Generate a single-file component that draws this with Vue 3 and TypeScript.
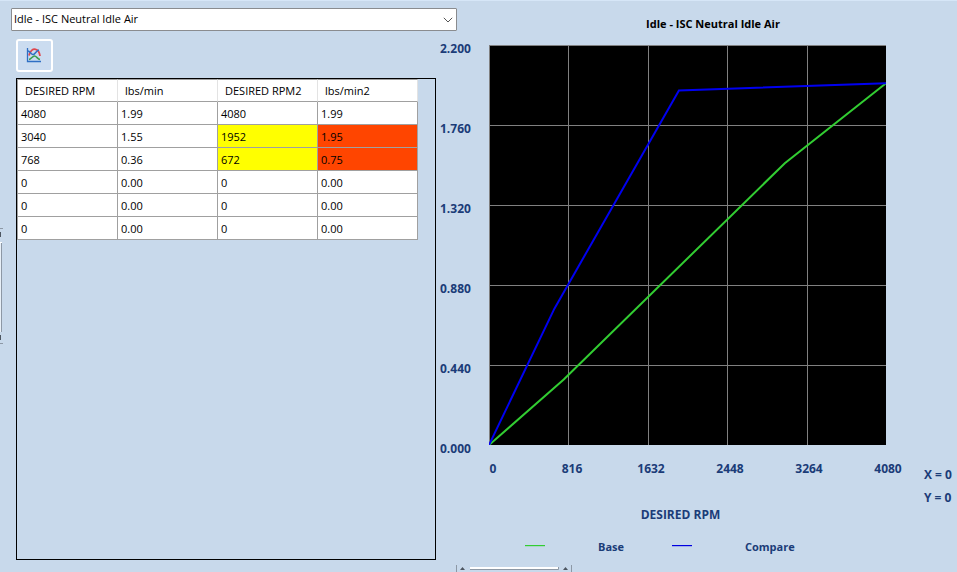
<script setup lang="ts">
import { computed, ref } from 'vue'

interface Point {
  rpm: number
  flow: number
}

const tables = ['Idle - ISC Neutral Idle Air']
const selected = ref(tables[0])

const base: Point[] = [
  { rpm: 4080, flow: 1.99 },
  { rpm: 3040, flow: 1.55 },
  { rpm: 768, flow: 0.36 },
  { rpm: 0, flow: 0 },
  { rpm: 0, flow: 0 },
  { rpm: 0, flow: 0 },
]
const compare: Point[] = [
  { rpm: 4080, flow: 1.99 },
  { rpm: 1952, flow: 1.95 },
  { rpm: 672, flow: 0.75 },
  { rpm: 0, flow: 0 },
  { rpm: 0, flow: 0 },
  { rpm: 0, flow: 0 },
]

const headers = ['DESIRED RPM', 'lbs/min', 'DESIRED RPM2', 'lbs/min2']
const rows = computed(() =>
  base.map((b, i) => ({
    base: b,
    compare: compare[i],
    rpmDiffers: b.rpm !== compare[i].rpm,
    flowDiffers: b.flow !== compare[i].flow,
  })),
)

const maxRpm = 4080
const maxFlow = 2.2
const plotWidth = 397
const plotHeight = 400
const steps = [0, 1, 2, 3, 4, 5]

const yLabels = steps.map((s) => (maxFlow * (1 - s / 5)).toFixed(3))
const xLabels = steps.map((s) => String((maxRpm * s) / 5))
const gridX = [0, 1, 2, 3, 4].map((s) => Math.round((plotWidth * s) / 5) + 0.5)
const gridY = [0, 1, 2, 3, 4].map((s) => (plotHeight * s) / 5 + 0.5)

function toLine(points: Point[]): string {
  return points
    .map((p) => `${(p.rpm / maxRpm) * plotWidth},${plotHeight * (1 - p.flow / maxFlow)}`)
    .join(' ')
}

const cursor = ref({ x: 0, y: 0 })
</script>

<template>
  <main class="page">
    <div class="splitter-v" aria-hidden="true">
      <svg width="3" height="116" viewBox="0 0 3 116">
        <path d="M0 .5h3M0 115.5h3" stroke="#8d98a5" />
        <path d="M0 4h1v5H0zM0 107h1v5H0z" fill="#4d5661" />
        <path d="M0 14.5h2" stroke="#fff" />
        <path d="M1.500 15v89" stroke="#8d98a5" />
        <path d="M.5 15v89" stroke="#e8f0f8" />
      </svg>
    </div>

    <div class="picker">
      <select v-model="selected" class="picker-select" aria-label="Table">
        <option v-for="t in tables" :key="t">{{ t }}</option>
      </select>
      <svg class="picker-arrow" width="10" height="6" viewBox="0 0 10 6" aria-hidden="true">
        <path d="M.8.8 5 5 9.200.8" fill="none" stroke="#555" />
      </svg>
    </div>

    <section class="data">
      <button type="button" class="chart-button" aria-label="Show chart">
        <svg width="16" height="16" viewBox="0 0 16 16" fill="none" aria-hidden="true">
          <path d="M1.500 1v13.500H15" stroke="#2f6fc4" stroke-width="1.300" />
          <path d="M3 8.500C4 3.500 7 1.800 9.500 2.300s4 3 4.500 6.700" stroke="#e0484e" stroke-width="1.800" />
          <path d="M3 12.500c2-.3 3.500-3.500 5.500-3.500s3 3 5.500 3.500" stroke="#3a9e4f" stroke-width="1.600" />
          <path d="M2 4c2 0 3 3.600 5 3.600S10 3.500 13 3" stroke="#2f6fc4" stroke-width="1.500" />
        </svg>
      </button>

      <div class="sheet">
        <table>
          <thead>
            <tr>
              <th v-for="h in headers" :key="h" scope="col">{{ h }}</th>
            </tr>
          </thead>
          <tbody>
            <tr v-for="(r, i) in rows" :key="i">
              <td>{{ r.base.rpm }}</td>
              <td>{{ r.base.flow.toFixed(2) }}</td>
              <td :class="{ 'rpm-diff': r.rpmDiffers }">{{ r.compare.rpm }}</td>
              <td :class="{ 'flow-diff': r.flowDiffers }">{{ r.compare.flow.toFixed(2) }}</td>
            </tr>
          </tbody>
        </table>
      </div>
    </section>

    <section class="chart">
      <h1 class="title">{{ selected }}</h1>
      <div class="y-axis">
        <span v-for="y in yLabels" :key="y">{{ y }}</span>
      </div>
      <svg
        class="plot"
        :viewBox="`0 0 ${plotWidth} ${plotHeight}`"
        preserveAspectRatio="none"
        role="img"
        :aria-label="selected"
      >
        <g class="grid-lines">
          <line v-for="x in gridX" :key="'x' + x" :x1="x" :x2="x" y1="0" :y2="plotHeight" />
          <line v-for="y in gridY" :key="'y' + y" x1="0" :x2="plotWidth" :y1="y" :y2="y" />
        </g>
        <polyline class="series base" :points="toLine(base)" />
        <polyline class="series compare" :points="toLine(compare)" />
      </svg>
      <div class="x-axis">
        <span v-for="x in xLabels" :key="x">{{ x }}</span>
      </div>
      <div class="readout">
        <span>X = {{ cursor.x }}</span>
        <span>Y = {{ cursor.y }}</span>
      </div>
      <div class="axis-name">DESIRED RPM</div>
      <div class="legend">
        <svg class="key" width="20" height="2" viewBox="0 0 20 2" aria-hidden="true">
          <path d="M0 .6h20" stroke="#32cd32" stroke-width="1.200" />
        </svg>
        <span class="key-label">Base</span>
        <svg class="key" width="20" height="2" viewBox="0 0 20 2" aria-hidden="true">
          <path d="M0 .6h20" stroke="#0000e0" stroke-width="1.200" />
        </svg>
        <span class="key-label">Compare</span>
      </div>
      <div class="splitter-h" aria-hidden="true">
        <svg width="116" height="7" viewBox="0 0 116 7">
          <path d="M.5 0v7M115.500 0v7" stroke="#8d98a5" />
          <path d="M4 5l2.500-3L9 5zM107 5l2.500-3 2.500 3z" fill="#4d5661" />
          <path d="M14 3h88" stroke="#fff" stroke-width="2" />
          <path d="M14 4.500h88.500V2" fill="none" stroke="#8d98a5" />
        </svg>
      </div>
    </section>
  </main>
</template>

<style>
body {
  background: #c8d9eb;
}
</style>

<style scoped>
.page {
  box-sizing: border-box;
  min-height: 100vh;
  display: grid;
  grid-template-columns: 11px minmax(0, 425fr) 4px 17px minmax(0, 500fr);
  grid-template-rows: 31px minmax(0, 1fr);
  background: #c8d9eb;
  box-shadow: inset 0 1px #d6e6f7;
  font-family: "Open Sans", "Noto Sans", sans-serif;
  font-size: 11px;
  color: #000;
}
svg {
  display: block;
}
.splitter-v {
  grid-column: 1;
  grid-row: 1 / 3;
  align-self: center;
}
.picker {
  grid-column: 2 / 5;
  grid-row: 1;
  position: relative;
  z-index: 1;
  padding-top: 8px;
}
.picker-select {
  display: block;
  box-sizing: border-box;
  width: 100%;
  height: 23px;
  padding: 0 24px 2px 2px;
  border: 1px solid #8a8c8f;
  border-radius: 1px;
  background: #fff;
  color: #000;
  font: inherit;
  appearance: none;
}
.picker-arrow {
  position: absolute;
  right: 4px;
  top: 17px;
  pointer-events: none;
}
.data {
  grid-column: 2;
  grid-row: 2;
  display: flex;
  flex-direction: column;
  align-items: flex-start;
  gap: 6px;
  padding: 8px 0 12px 5px;
}
.chart-button {
  box-sizing: border-box;
  width: 37px;
  height: 33px;
  padding: 0 2px 2px 0;
  display: flex;
  align-items: center;
  justify-content: center;
  border: 2px solid #fff;
  border-radius: 3px;
  background: #cbdcf0;
}
.sheet {
  box-sizing: border-box;
  flex: 1;
  align-self: stretch;
  border: 1px solid #000;
}
table {
  width: 401px;
  max-width: 100%;
  table-layout: fixed;
  border-spacing: 0;
  border-left: 1px solid #a0a0a0;
  background: #fff;
}
th,
td {
  box-sizing: border-box;
  height: 23px;
  padding: 2px 3px 0;
  border-right: 1px solid #a0a0a0;
  border-bottom: 1px solid #a0a0a0;
  text-align: left;
  font-weight: 400;
  line-height: 20px;
  white-space: nowrap;
}
th {
  padding: 0 0 0 7px;
  border-top: 1px solid #a0a0a0;
  border-right-color: #e3e3e3;
}
.rpm-diff {
  background: #ff0;
}
.flow-diff {
  background: #ff4500;
}
.chart {
  grid-column: 4 / 6;
  grid-row: 1 / 3;
  display: grid;
  grid-template-columns: 49px minmax(0, 1fr) 71px;
  grid-template-rows: 41px 4px minmax(300px, 1fr) 12px 23px 23px 24px 38px 7px;
  color: #1b3c78;
  font-size: 12px;
  font-weight: 700;
  line-height: 16px;
}
.title {
  grid-column: 1 / 4;
  grid-row: 1;
  margin: 0;
  padding: 16px 0 0 29px;
  color: #000;
  font-size: 11px;
  line-height: 16px;
  text-align: center;
}
.y-axis {
  grid-column: 1;
  grid-row: 2 / 5;
  display: flex;
  flex-direction: column;
  justify-content: space-between;
}
.plot {
  grid-column: 2;
  grid-row: 3;
  width: 100%;
  height: 100%;
  contain: size;
  background: #000;
}
.grid-lines {
  stroke: #808080;
}
.series {
  fill: none;
  stroke-width: 2;
  vector-effect: non-scaling-stroke;
}
.base {
  stroke: #32cd32;
}
.compare {
  stroke: #0000f0;
}
.x-axis {
  grid-column: 1 / 4;
  grid-row: 5;
  display: flex;
  justify-content: space-between;
  padding: 4px 51px 0 35px;
}
.x-axis span {
  width: 36px;
  text-align: center;
}
.readout {
  grid-column: 3;
  grid-row: 5 / 7;
  display: flex;
  flex-direction: column;
  padding: 6px 0 0 38px;
  line-height: 23px;
  white-space: nowrap;
}
.axis-name {
  grid-column: 1 / 4;
  grid-row: 7;
  padding: 4px 36px 0 0;
  text-align: center;
}
.legend {
  grid-column: 1 / 4;
  grid-row: 8;
  display: flex;
  align-items: flex-start;
  padding: 12px 0 0 85px;
  font-size: 11px;
}
.key {
  flex: none;
  margin-top: 6px;
}
.key-label {
  width: 74px;
  padding-left: 53px;
}
.splitter-h {
  grid-column: 1 / 4;
  grid-row: 9;
  padding-left: 16px;
}
</style>
